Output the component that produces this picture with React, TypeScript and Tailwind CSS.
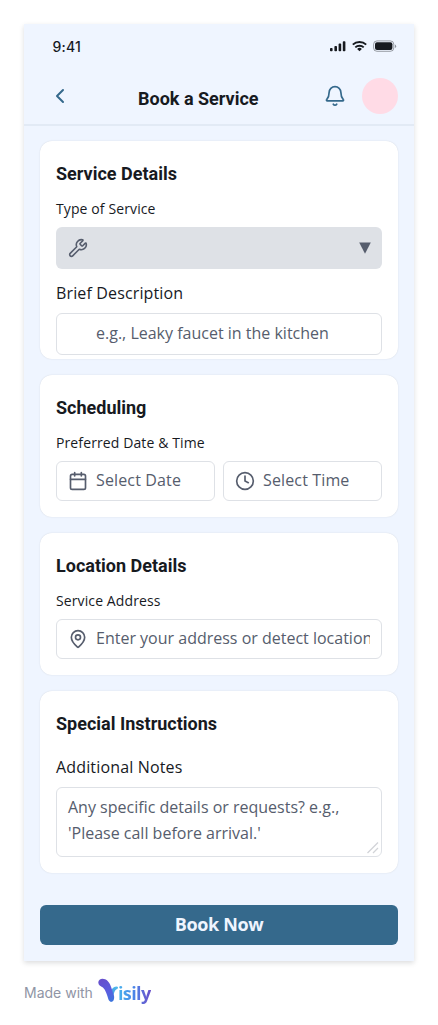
import type { ReactNode } from "react";
import { Calendar, Clock, MapPin, Wrench } from "lucide-react";

function Card({ title, className, children }: { title: string; className: string; children: ReactNode }) {
  return (
    <section className={`flex flex-col rounded-xl bg-white px-4 pt-4 shadow-[0_0_1px_#171a1f12,0_0_2px_#171a1f14] ${className}`}>
      <h2 className="font-['Roboto',sans-serif] text-[18px] font-bold leading-[34px]">{title}</h2>
      {children}
    </section>
  );
}

function SmallLabel({ children }: { children: ReactNode }) {
  return <span className="mt-[7px] mb-[7px] text-sm leading-[22px] tracking-[0.11px]">{children}</span>;
}

function Field({ icon, className, children }: { icon?: ReactNode; className: string; children: ReactNode }) {
  return (
    <div className={`flex min-w-0 items-center rounded-md border border-[#dee1e6] px-[11px] text-[#565d6d] ${className}`}>
      <span className="flex h-5 w-5 shrink-0 items-center justify-center">{icon}</span>
      <span className="mb-0.5 ml-2 min-w-0 flex-1 overflow-hidden whitespace-nowrap text-base leading-[26px]">{children}</span>
    </div>
  );
}

function StatusIcons() {
  return (
    <svg width="68" height="14" viewBox="0 0 68 14" fill="#171a1f">
      <rect x="0" y="8" width="2.6" height="3.2" rx="0.8" />
      <rect x="4.4" y="6" width="2.6" height="5.2" rx="0.8" />
      <rect x="8.6" y="3.6" width="2.6" height="7.6" rx="0.8" />
      <rect x="12.8" y="1.2" width="2.6" height="10" rx="0.8" />
      <g fill="none" stroke="#171a1f" strokeWidth="1.9">
        <path d="M22.8 4.7a9.5 9.5 0 0 1 13.4 0" />
        <path d="M25.3 7.4a6 6 0 0 1 8.4 0" />
      </g>
      <path d="M29.5 11.3 27.1 8.9a3.5 3.5 0 0 1 4.8 0Z" />
      <rect x="43.6" y="0.9" width="20.2" height="10.4" rx="3.4" fill="none" stroke="#171a1f" strokeOpacity="0.4" />
      <rect x="45" y="2.3" width="17.4" height="7.6" rx="2" />
      <path d="M65 4.4v3.5a1.9 1.9 0 0 0 0-3.5Z" fillOpacity="0.45" />
    </svg>
  );
}

function BellIcon() {
  return (
    <svg width="20" height="22" viewBox="0 0 20 22" fill="none" stroke="#35698c" strokeWidth="1.7" strokeLinecap="round" strokeLinejoin="round">
      <path d="M4.1 7.5a5.9 5.9 0 0 1 11.8 0c0 4.4 1.1 5.5 2.4 7 .5.5.2 1.3-.6 1.3H2.3c-.8 0-1.1-.8-.6-1.3 1.3-1.5 2.4-2.6 2.4-7Z" />
      <path d="M8.3 19.2a2 2 0 0 0 3.4 0" />
    </svg>
  );
}

function VisilyLogo() {
  return (
    <div className="flex items-start">
      <svg width="22" height="26" viewBox="0 0 22 26">
        <defs>
          <linearGradient id="stem" x1="3" y1="3" x2="14" y2="24" gradientUnits="userSpaceOnUse">
            <stop offset="0" stopColor="#6550cd" />
            <stop offset="0.55" stopColor="#5a5ee0" />
            <stop offset="1" stopColor="#3976dc" />
          </linearGradient>
          <linearGradient id="branch" x1="20" y1="9" x2="14" y2="22" gradientUnits="userSpaceOnUse">
            <stop offset="0" stopColor="#52bdec" />
            <stop offset="1" stopColor="#397ddd" />
          </linearGradient>
        </defs>
        <path d="M12.2 15c1.2-4.1 3.4-6.5 6.2-6.4 2 .1 2.3 1.7.7 2.5-2.8 1.4-3.3 4.6-3.9 8.7-.3 3-1.2 4-2.7 3.7Z" fill="url(#branch)" />
        <path d="M.3 4.6C.3 2.300 2.300.8 4.600.8c3.600 0 6.100 2.800 7.600 5.900 1.800 4.100 2.500 7.700 3.700 10.800.6 2.100.3 5.900-2.400 6.200-1.900.1-2.800-1.400-3.200-2.700C9 16.500 7.800 12.200 4.900 9.400 2.500 8.200.3 7.200.3 4.600Z" fill="url(#stem)" />
      </svg>
      <span className="-ml-[2px] mt-[3px] bg-gradient-to-r from-[#48b3ed] via-[#4a83e7] to-[#684ec8] bg-clip-text font-['Open_Sans',sans-serif] text-[18px] font-bold leading-6 tracking-[-0.6px] text-transparent">
        isily
      </span>
    </div>
  );
}

export default function App() {
  return (
    <div className="h-[1025px] w-[438px] overflow-hidden bg-white px-6 pt-6 font-['Open_Sans',sans-serif] text-[#171a1f]">
      <main className="flex h-[937px] w-[390px] flex-col bg-[#eff5ff] shadow-[0_2px_5px_#171a1f26]">
        <div className="flex h-10 items-center justify-between pl-[28.5px] pr-[16px] pt-[5px]">
          <span className="font-['Inter',sans-serif] text-[14px] font-medium leading-5 tracking-[0.2px]">9:41</span>
          <StatusIcons />
        </div>
        <header className="flex h-[62px] items-center border-b-2 border-[#e2eaf5] pl-[31px] pr-4">
          <svg className="mt-1" width="10" height="16" viewBox="0 0 10 16" fill="none" stroke="#35698c" strokeWidth="2" strokeLinecap="round" strokeLinejoin="round">
            <path d="M8 2 2 8l6 6" />
          </svg>
          <h1 className="ml-[73px] mt-2.5 font-['Roboto',sans-serif] text-[18px] font-bold leading-7">Book a Service</h1>
          <div className="ml-auto flex items-center gap-[17px] pt-1">
            <BellIcon />
            <div className="h-9 w-9 rounded-full bg-[#ffdbe6]" />
          </div>
        </header>
        <div className="flex flex-col gap-4 px-4 pt-[15px]">
          <Card title="Service Details" className="h-[218px]">
            <SmallLabel>Type of Service</SmallLabel>
            <div className="flex h-[42px] shrink-0 items-center justify-between rounded-md bg-[#dee1e6] pl-3 pr-[11px] text-[#565d6d]">
              <Wrench size={20} strokeWidth={1.9} />
              <svg width="12" height="12" viewBox="0 0 12 12" fill="#565d6d">
                <path d="M.2.5h11.6L6 11.8Z" />
              </svg>
            </div>
            <span className="mb-[7px] mt-[11px] text-base leading-[26px] tracking-[0.14px]">Brief Description</span>
            <Field className="h-[42px] shrink-0">e.g., Leaky faucet in the kitchen</Field>
          </Card>
          <Card title="Scheduling" className="h-[142px]">
            <SmallLabel>Preferred Date &amp; Time</SmallLabel>
            <div className="grid grid-cols-2 gap-2 tracking-[0.14px]">
              <Field className="h-10" icon={<Calendar size={20} strokeWidth={2} />}>Select Date</Field>
              <Field className="h-10" icon={<Clock size={20} strokeWidth={2} />}>Select Time</Field>
            </div>
          </Card>
          <Card title="Location Details" className="h-[142px]">
            <SmallLabel>Service Address</SmallLabel>
            <Field className="h-10" icon={<MapPin size={20} strokeWidth={2} />}>Enter your address or detect location</Field>
          </Card>
          <Card title="Special Instructions" className="h-[182px]">
            <span className="mb-[7px] mt-[13px] text-base leading-[26px] tracking-[0.16px]">Additional Notes</span>
            <div className="relative h-[70px] rounded-md border border-[#dee1e6] px-[11px] pt-[6px] text-base leading-[26px] text-[#565d6d]">
              Any specific details or requests? e.g.,
              <br />
              'Please call before arrival.'
              <svg className="absolute bottom-[2px] right-[2px]" width="12" height="12" viewBox="0 0 12 12" stroke="#d2d4d8" strokeWidth="1.3">
                <path d="M.5 11 11 .5M6 11l5-5" />
              </svg>
            </div>
          </Card>
        </div>
        <button className="mx-4 mt-8 h-10 rounded-md bg-[#35698c] pb-0.5 text-[18px] font-bold leading-7 tracking-[-0.35px] text-[#eff5ff]">Book Now</button>
      </main>
      <footer className="flex items-start pt-[17px]">
        <span className="mr-[5px] mt-[5px] font-['Inter',sans-serif] text-[14px] leading-5 text-[#9095a5]">Made with</span>
        <VisilyLogo />
      </footer>
    </div>
  );
}
